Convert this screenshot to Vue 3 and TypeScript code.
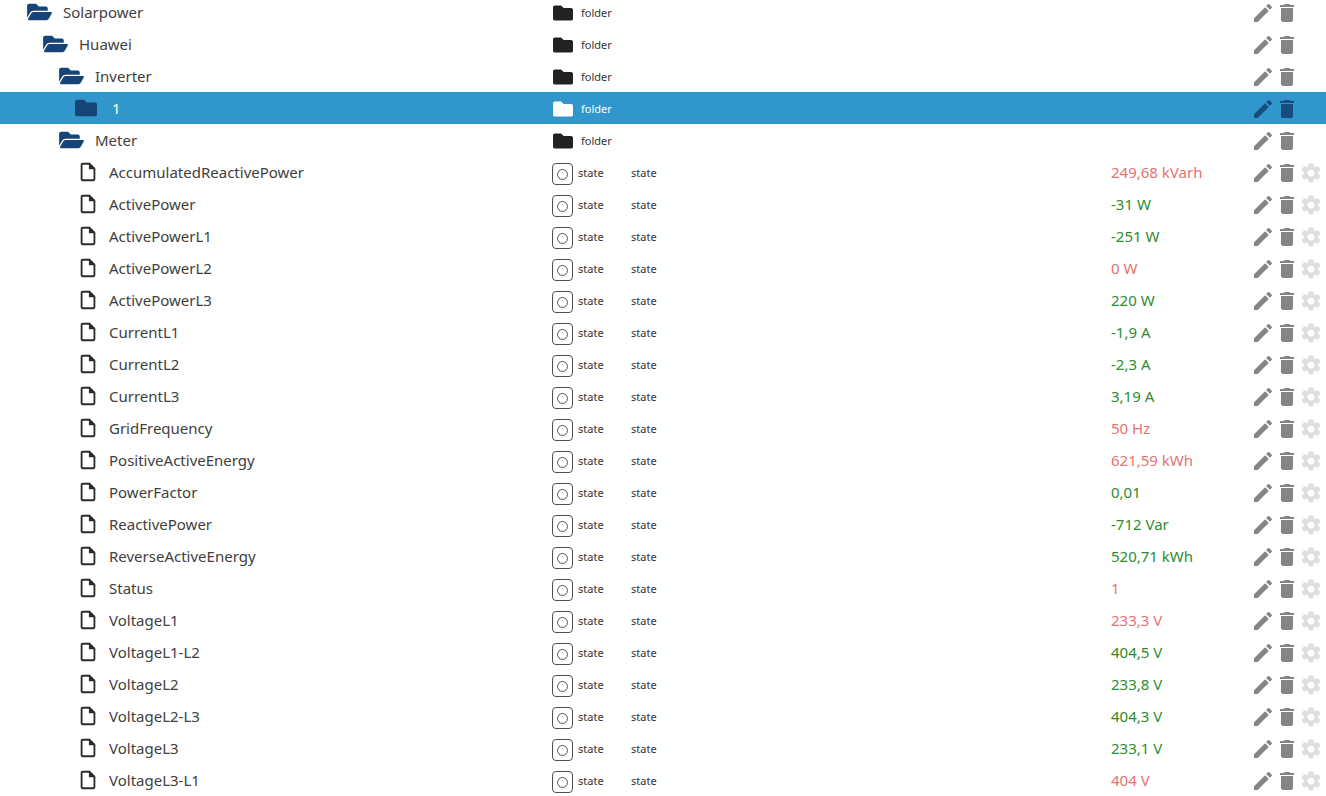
<script setup lang="ts">
interface Row {
  name: string
  level: number
  kind: 'open' | 'closed' | 'file'
  value?: string
  ok?: boolean
  selected?: boolean
}

const states: [string, string, boolean][] = [
  ['AccumulatedReactivePower', '249,68 kVarh', false],
  ['ActivePower', '-31 W', true],
  ['ActivePowerL1', '-251 W', true],
  ['ActivePowerL2', '0 W', false],
  ['ActivePowerL3', '220 W', true],
  ['CurrentL1', '-1,9 A', true],
  ['CurrentL2', '-2,3 A', true],
  ['CurrentL3', '3,19 A', true],
  ['GridFrequency', '50 Hz', false],
  ['PositiveActiveEnergy', '621,59 kWh', false],
  ['PowerFactor', '0,01', true],
  ['ReactivePower', '-712 Var', true],
  ['ReverseActiveEnergy', '520,71 kWh', true],
  ['Status', '1', false],
  ['VoltageL1', '233,3 V', false],
  ['VoltageL1-L2', '404,5 V', true],
  ['VoltageL2', '233,8 V', true],
  ['VoltageL2-L3', '404,3 V', true],
  ['VoltageL3', '233,1 V', true],
  ['VoltageL3-L1', '404 V', false],
]

const rows: Row[] = [
  { name: 'Solarpower', level: 0, kind: 'open' },
  { name: 'Huawei', level: 1, kind: 'open' },
  { name: 'Inverter', level: 2, kind: 'open' },
  { name: '1', level: 3, kind: 'closed', selected: true },
  { name: 'Meter', level: 2, kind: 'open' },
  ...states.map(([name, value, ok]): Row => ({ name, value, ok, level: 3, kind: 'file' })),
]

const folderOpen = 'M572.694 292.093L500.27 416.248A63.997 63.997 0 0 1 444.989 448H45.025c-18.523 0-30.064-20.093-20.731-36.093l72.424-124.155A64 64 0 0 1 152 256h399.964c18.523 0 30.064 20.093 20.73 36.093zM152 224h328v-48c0-26.51-21.49-48-48-48H272l-64-64H48C21.49 64 0 85.49 0 112v278.046l69.077-118.418C86.214 242.25 117.989 224 152 224z'
const folderClosed = 'M464 128H272l-64-64H48C21.49 64 0 85.49 0 112v288c0 26.51 21.49 48 48 48h416c26.51 0 48-21.49 48-48V176c0-26.51-21.49-48-48-48z'
const filePath = 'M14 2H6c-1.1 0-1.99.9-1.99 2L4 20c0 1.1.89 2 1.99 2H18c1.1 0 2-.9 2-2V8l-6-6zM6 20V4h7v5h5v11H6z'
const editPath = 'M3 17.25V21h3.75L17.81 9.94l-3.75-3.75L3 17.25zM20.71 7.04c.39-.39.39-1.02 0-1.41l-2.34-2.34a.9959.9959 0 0 0-1.41 0l-1.83 1.83 3.75 3.75 1.83-1.83z'
const deletePath = 'M6 19c0 1.1.9 2 2 2h8c1.1 0 2-.9 2-2V7H6v12zM19 4h-3.5l-1-1h-5l-1 1H5v2h14V4z'
const gearPath = 'M19.14 12.94c.04-.3.06-.61.06-.94 0-.32-.02-.64-.07-.94l2.03-1.58c.18-.14.23-.41.12-.61l-1.92-3.32c-.12-.22-.37-.29-.59-.22l-2.39.96c-.5-.38-1.03-.7-1.62-.94l-.36-2.54c-.04-.24-.24-.41-.48-.41h-3.84c-.24 0-.43.17-.47.41l-.36 2.54c-.59.24-1.13.57-1.62.94l-2.39-.96c-.22-.08-.47 0-.59.22L2.74 8.87c-.12.21-.08.47.12.61l2.03 1.58c-.05.3-.09.63-.09.94s.02.64.07.94l-2.03 1.58c-.18.14-.23.41-.12.61l1.92 3.32c.12.22.37.29.59.22l2.39-.96c.5.38 1.03.7 1.62.94l.36 2.54c.05.24.24.41.48.41h3.84c.24 0 .44-.17.47-.41l.36-2.54c.59-.24 1.13-.56 1.62-.94l2.39.96c.22.08.47 0 .59-.22l1.92-3.32c.12-.22.07-.47-.12-.61l-2.01-1.58zM12 15.6c-1.98 0-3.6-1.62-3.6-3.6s1.62-3.6 3.6-3.6 3.6 1.62 3.6 3.6-1.62 3.6-3.6 3.6z'
</script>

<template>
  <div class="tree">
    <div
      v-for="row in rows"
      :key="row.name"
      class="row"
      :class="{ selected: row.selected }"
    >
      <div class="name" :class="[`level-${row.level}`, `kind-${row.kind}`]">
        <svg v-if="row.kind === 'open'" class="folder open" viewBox="0 0 576 512"><path :d="folderOpen" /></svg>
        <svg v-else-if="row.kind === 'closed'" class="folder closed" viewBox="0 0 512 512"><path :d="folderClosed" /></svg>
        <svg v-else class="file" viewBox="0 0 24 24"><path :d="filePath" /></svg>
        <span class="label">{{ row.name }}</span>
      </div>

      <div class="type">
        <template v-if="row.kind === 'file'">
          <span class="state-icon"><i></i></span>
          <span class="type-text state-text">state</span>
        </template>
        <template v-else>
          <svg class="type-folder" viewBox="0 0 512 512"><path :d="folderClosed" /></svg>
          <span class="type-text">folder</span>
        </template>
      </div>

      <div class="role">{{ row.kind === 'file' ? 'state' : '' }}</div>

      <div class="value" :class="row.ok ? 'good' : 'bad'">{{ row.value }}</div>

      <div class="actions">
        <svg class="act edit" viewBox="0 0 24 24"><path :d="editPath" /></svg>
        <svg class="act del" viewBox="0 0 24 24"><path :d="deletePath" /></svg>
        <svg v-if="row.kind === 'file'" class="act gear" viewBox="0 0 24 24"><path :d="gearPath" /></svg>
      </div>
    </div>
  </div>
</template>

<style>
html, body {
  margin: 0;
  background: #fff;
  overflow: hidden;
}
</style>

<style scoped>
.tree {
  margin-top: -4px;
  font-family: "Noto Sans", "Open Sans", sans-serif;
  color: #404040;
}
.row {
  display: grid;
  grid-template-columns: 552px 79px 480px 1fr 72px;
  padding-right: 3px;
  height: 32px;
  align-items: center;
}
.row.selected {
  background: #3196cb;
}
.name {
  display: flex;
  align-items: center;
  min-width: 0;
}
.level-0 { padding-left: 27px; }
.level-1 { padding-left: 43px; }
.level-2 { padding-left: 59px; }
.level-3 { padding-left: 75px; }
.level-3.kind-file { padding-left: 77px; }
.folder {
  height: 22px;
  fill: #164477;
  flex: none;
}
.folder.open { width: 25px; margin-right: 11px; }
.folder.closed { width: 22px; margin-right: 15px; }
.file {
  width: 22px;
  height: 22px;
  fill: #2b2b2b;
  flex: none;
  margin-right: 10px;
  margin-top: -1px;
}
.label {
  font-size: 15px;
  white-space: nowrap;
}
.selected .label {
  color: #fff;
}
.type {
  display: flex;
  align-items: center;
}
.type-folder {
  width: 20px;
  height: 20px;
  fill: #222;
  margin-left: 1px;
  margin-right: 8px;
  margin-top: 2px;
}
.selected .type-folder {
  fill: #fff;
}
.type-text {
  font-size: 11px;
  color: #333;
}
.selected .type-text {
  color: #fff;
}
.state-text {
  margin-left: 5px;
}
.state-icon {
  box-sizing: border-box;
  width: 21px;
  height: 22px;
  margin-top: 4px;
  border: 1.5px solid #505050;
  border-radius: 4px;
  display: flex;
  align-items: center;
  justify-content: center;
}
.state-icon i {
  box-sizing: border-box;
  width: 11px;
  height: 11px;
  border: 1.5px solid #555;
  border-radius: 50%;
}
.role {
  font-size: 11px;
  color: #333;
}
.value {
  font-size: 15px;
  white-space: nowrap;
}
.value.good { color: #2e8b2e; }
.value.bad { color: #e57373; }
.actions {
  display: flex;
  margin-top: 2px;
}
.act {
  width: 24px;
  height: 24px;
  flex: none;
  fill: #858585;
}
.act.gear {
  fill: #dedede;
}
.selected .act {
  fill: #174d7e;
}
</style>
